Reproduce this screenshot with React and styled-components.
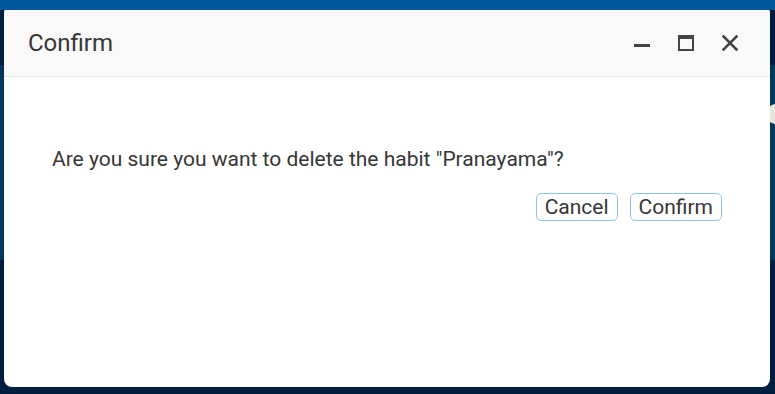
import React from 'react';
import styled, { createGlobalStyle } from 'styled-components';

const GlobalStyle = createGlobalStyle`
  html, body {
    margin: 0;
    padding: 0;
    width: 100%;
    height: 100%;
    overflow: hidden;
    background: #001f3f;
  }
  #root {
    height: 100%;
  }
  * {
    box-sizing: border-box;
  }
`;

const Page = styled.div`
  position: relative;
  height: 100%;
  display: flex;
  flex-direction: column;
  background: #001f3f;
`;

const TopBar = styled.div`
  height: 10px;
  background: #00589a;
`;

const Spacer = styled.div`
  height: ${p => p.h}px;
`;

const Band = styled.div`
  height: 195px;
  background: #00385a;
  display: flex;
  justify-content: flex-end;
  padding-top: 39px;
`;

const Knob = styled.div`
  width: 20px;
  height: 20px;
  border-radius: 50%;
  background: #e9e6dc;
  margin-right: -11px;
`;

const Dialog = styled.div`
  position: absolute;
  left: 4px;
  top: 10px;
  width: 766px;
  height: 377px;
  background: #ffffff;
  border-radius: 2px 2px 8px 8px;
  overflow: hidden;
  display: flex;
  flex-direction: column;
  font-family: Roboto, "Liberation Sans", Arial, sans-serif;
  color: #363636;
`;

const Header = styled.div`
  height: 67px;
  flex: none;
  display: flex;
  align-items: center;
  justify-content: space-between;
  padding: 0 32px 0 24px;
  background: #f9f9fa;
  border-bottom: 1px solid #e6e4f2;
`;

const Title = styled.h2`
  margin: 0;
  font-size: 24px;
  line-height: 28px;
  font-weight: 400;
  color: #363636;
`;

const Controls = styled.div`
  display: flex;
  align-items: center;
  gap: 28px;
`;

const IconButton = styled.button`
  width: 16px;
  height: 16px;
  padding: 0;
  border: 0;
  background: none;
  display: flex;
  cursor: pointer;
  color: #444;
  svg {
    display: block;
  }
`;

const Body = styled.div`
  flex: 1;
  padding: 68px 48px 0;
`;

const Message = styled.p`
  margin: 0;
  font-size: 21px;
  line-height: 28px;
`;

const Actions = styled.div`
  display: flex;
  justify-content: flex-end;
  gap: 12px;
  margin-top: 20px;
`;

const Button = styled.button`
  height: 28px;
  padding: 1px 8px 0;
  border: 1px solid #8ec0f2;
  border-radius: 5px;
  background: #fff;
  font-family: Roboto, "Liberation Sans", Arial, sans-serif;
  font-size: 21px;
  line-height: 25px;
  color: #363636;
  cursor: pointer;
`;

const MinimizeIcon = () => (
  <svg width="16" height="16" viewBox="0 0 16 16">
    <rect x="0" y="9" width="16" height="3" fill="#444" />
  </svg>
);

const MaximizeIcon = () => (
  <svg width="16" height="16" viewBox="0 0 16 16">
    <rect x="1" y="1" width="14" height="14" fill="none" stroke="#444" strokeWidth="2" />
    <rect x="0" y="0" width="16" height="4" fill="#444" />
  </svg>
);

const CloseIcon = () => (
  <svg width="16" height="16" viewBox="0 0 16 16">
    <path d="M1.5 1.5 L14.5 14.5 M14.5 1.5 L1.5 14.5" stroke="#444" strokeWidth="2.6" strokeLinecap="square" />
  </svg>
);

function App() {
  return (
    <>
      <GlobalStyle />
      <Page>
        <TopBar />
        <Spacer h={55} />
        <Band>
          <Knob />
        </Band>
        <Dialog role="dialog">
          <Header>
            <Title>Confirm</Title>
            <Controls>
              <IconButton aria-label="Minimize"><MinimizeIcon /></IconButton>
              <IconButton aria-label="Maximize"><MaximizeIcon /></IconButton>
              <IconButton aria-label="Close"><CloseIcon /></IconButton>
            </Controls>
          </Header>
          <Body>
            <Message>Are you sure you want to delete the habit "Pranayama"?</Message>
            <Actions>
              <Button>Cancel</Button>
              <Button>Confirm</Button>
            </Actions>
          </Body>
        </Dialog>
      </Page>
    </>
  );
}

export default App;
